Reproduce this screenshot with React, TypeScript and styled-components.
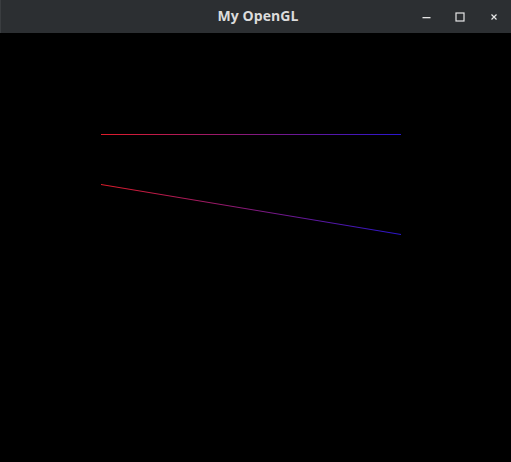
import React from "react";
import styled, { createGlobalStyle } from "styled-components";

const Global = createGlobalStyle`
  html, body { margin: 0; padding: 0; background: #000; }
  body { width: 511px; height: 462px; overflow: hidden; }
`;

const Window = styled.div`
  width: 511px;
  height: 462px;
  display: flex;
  flex-direction: column;
  background: #000;
`;

const TitleBar = styled.div`
  height: 33px;
  flex: 0 0 33px;
  background: #2c2f32;
  border-left: 1px solid #3a3d40;
  box-sizing: border-box;
  position: relative;
  display: flex;
  align-items: center;
  justify-content: center;
`;

const Title = styled.span`
  font-family: "Open Sans", "DejaVu Sans", sans-serif;
  font-weight: 700;
  font-size: 14px;
  color: #dcdcdc;
  letter-spacing: 0.1px;
  margin-left: 4px;
  margin-top: -2px;
`;

const Controls = styled.div`
  position: absolute;
  right: 0;
  top: 0;
  height: 33px;
  display: flex;
  align-items: center;
`;

const Ctrl = styled.div<{ $w: number }>`
  width: ${(p) => p.$w}px;
  height: 33px;
  display: flex;
  align-items: center;
  justify-content: center;
`;

const Canvas = styled.div`
  flex: 1;
  background: #000;
`;

export default function App() {
  return (
    <Window>
      <Global />
      <TitleBar>
        <Title>My OpenGL</Title>
        <Controls>
          <Ctrl $w={34}>
            <svg width="9" height="9" viewBox="0 0 9 9">
              <rect x="0.5" y="5" width="8" height="1.3" fill="#e6e6e6" />
            </svg>
          </Ctrl>
          <Ctrl $w={34}>
            <svg width="10" height="10" viewBox="0 0 10 10">
              <rect x="1" y="1" width="8" height="8" fill="none" stroke="#e6e6e6" strokeWidth="1.2" />
            </svg>
          </Ctrl>
          <Ctrl $w={34}>
            <svg width="8" height="8" viewBox="0 0 8 8">
              <path d="M1.5 1.5 L6.5 6.5 M6.5 1.5 L1.5 6.5" stroke="#e6e6e6" strokeWidth="1.2" />
            </svg>
          </Ctrl>
        </Controls>
      </TitleBar>
      <Canvas>
        <svg width="511" height="429" viewBox="0 0 511 429">
          <defs>
            <linearGradient id="g" gradientUnits="userSpaceOnUse" x1="101" y1="0" x2="401" y2="0">
              <stop offset="0" stopColor="#e01c2a" />
              <stop offset="1" stopColor="#2a16d0" />
            </linearGradient>
          </defs>
          <line x1="101" y1="101.5" x2="401" y2="101.5" stroke="url(#g)" strokeWidth="1" />
          <line x1="101" y1="151.5" x2="401" y2="201.5" stroke="url(#g)" strokeWidth="1" />
        </svg>
      </Canvas>
    </Window>
  );
}
